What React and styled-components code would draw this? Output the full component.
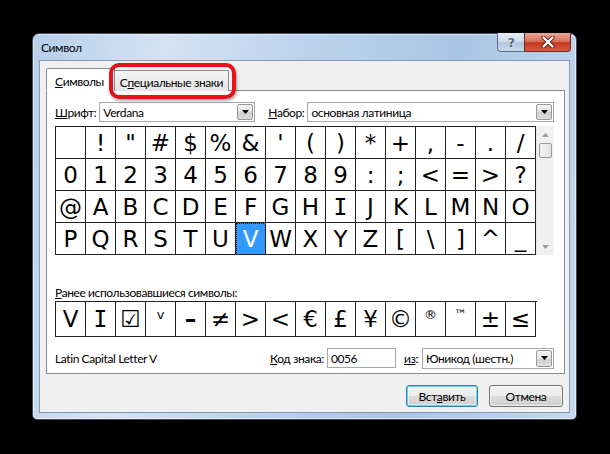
import React from 'react'
import styled, { createGlobalStyle } from 'styled-components'

const GlobalStyle = createGlobalStyle`
  html, body {
    margin: 0;
    padding: 0;
    background: #000;
  }
  body {
    font-family: 'Lato', 'Liberation Sans', sans-serif;
    font-size: 12px;
    letter-spacing: -0.4px;
    color: #000;
  }
`

const Screen = styled.div`
  width: 610px;
  height: 454px;
  padding: 33px 0 0 32px;
  box-sizing: border-box;
`

const Window = styled.div`
  width: 545px;
  height: 387px;
  box-sizing: border-box;
  border: 1px solid #3e4c5e;
  border-radius: 7px 7px 5px 5px;
  background: linear-gradient(100deg, #b6cfe9 0%, #d3e3f4 22%, #bcd3ec 45%, #aac5e4 70%, #c3d8ef 100%);
  box-shadow: inset 0 0 0 1px rgba(255, 255, 255, 0.55);
  display: flex;
  flex-direction: column;
`

const TitleBar = styled.div`
  height: 26px;
  display: flex;
  align-items: flex-start;
  padding-left: 8px;
`

const Title = styled.div`
  line-height: 27px;
  font-size: 12px;
`

const Caption = styled.div`
  margin-left: auto;
  margin-right: 5px;
  margin-top: -1px;
  display: flex;
`

const HelpButton = styled.div`
  width: 27px;
  height: 19px;
  box-sizing: border-box;
  border: 1px solid #5b7190;
  border-right: none;
  border-top: none;
  border-radius: 0 0 0 4px;
  background: linear-gradient(#e6eef7 0%, #cfdcea 45%, #b3c6dc 55%, #c9d9ea 100%);
  display: flex;
  align-items: center;
  justify-content: center;
  font-family: 'DejaVu Sans', sans-serif;
  font-weight: bold;
  font-size: 13px;
  color: #5a6b80;
  text-shadow: 0 0 2px #fff;
`

const CloseButton = styled.div`
  width: 47px;
  height: 19px;
  box-sizing: border-box;
  border: 1px solid #6e2a22;
  border-top: none;
  border-radius: 0 0 4px 0;
  background: linear-gradient(#e7a799 0%, #d9735f 45%, #c6371f 55%, #d65a43 100%);
  display: flex;
  align-items: center;
  justify-content: center;
`

const Client = styled.div`
  flex: 1;
  margin: 0 6px 7px 6px;
  background: #f0f0f0;
  border: 1px solid #8798b1;
  padding: 7px 4px 5px 6px;
  display: flex;
  flex-direction: column;
`

const TabStrip = styled.div`
  height: 23px;
  display: flex;
  align-items: flex-end;
  margin-bottom: -1px;
  position: relative;
  z-index: 1;
`

const Tab = styled.div`
  position: relative;
  box-sizing: border-box;
  height: ${p => (p.$active ? '23px' : '21px')};
  padding: ${p => (p.$active ? '3px 10px 0 8px' : '2px 5px 0 5px')};
  margin-right: ${p => (p.$active ? '-1px' : '0')};
  border: 1px solid #898c95;
  border-bottom: ${p => (p.$active ? '1px solid #fff' : 'none')};
  border-radius: 2px 2px 0 0;
  background: ${p => (p.$active ? '#fff' : 'linear-gradient(#f4f4f4, #e6e6e6)')};
  display: flex;
  align-items: center;
  white-space: nowrap;
`

const Highlight = styled.div`
  position: absolute;
  left: -6px;
  right: -8px;
  top: -8px;
  bottom: -8px;
  border: 4px solid #e3121b;
  border-radius: 10px;
  box-shadow: 1px 2px 3px rgba(0, 0, 0, 0.35);
  pointer-events: none;
`

const Accel = styled.span`
  text-decoration: underline;
`

const Panel = styled.div`
  background: #fff;
  border: 1px solid #898c95;
  padding: 11px 10px 4px 8px;
  display: flex;
  flex-direction: column;
`

const FieldRow = styled.div`
  display: flex;
  align-items: center;
  height: ${p => p.$h || 20}px;
  margin-top: ${p => p.$mt || 0}px;
`

const Label = styled.span`
  white-space: nowrap;
  margin: ${p => p.$m || '0'};
`

const Combo = styled.div`
  box-sizing: border-box;
  height: ${p => p.$h || 20}px;
  width: ${p => (p.$w ? `${p.$w}px` : 'auto')};
  flex: ${p => (p.$w ? 'none' : '1')};
  border: 1px solid #a5a7ad;
  background: #fff;
  display: flex;
  align-items: stretch;
`

const ComboValue = styled.div`
  flex: 1;
  padding-left: 3px;
  display: flex;
  align-items: center;
  white-space: nowrap;
  overflow: hidden;
`

const DropButton = styled.div`
  width: 16px;
  margin: 1px;
  box-sizing: border-box;
  border: 1px solid #9a9a9a;
  border-radius: 2px;
  background: linear-gradient(#f3f3f3 0%, #e3e3e3 50%, #cfcfcf 51%, #dcdcdc 100%);
  display: flex;
  align-items: center;
  justify-content: center;
`

const TextBox = styled.div`
  box-sizing: border-box;
  width: 69px;
  height: 20px;
  border: 1px solid #a5a7ad;
  padding-left: 3px;
  display: flex;
  align-items: center;
`

const GridArea = styled.div`
  display: flex;
  margin-top: 4px;
`

const CharGrid = styled.div`
  display: grid;
  grid-template-columns: repeat(16, 30px);
  border-top: 1px solid #222;
  border-left: 1px solid #222;
`

const Cell = styled.div`
  box-sizing: border-box;
  width: 30px;
  height: ${p => p.$h || 32}px;
  border-right: 1px solid #222;
  border-bottom: 1px solid #222;
  display: flex;
  align-items: ${p => (p.$small ? 'flex-start' : 'center')};
  justify-content: center;
  padding-top: ${p => (p.$small ? '5px' : '0')};
  font-family: ${p => (p.$mono ? "'DejaVu Sans Mono'" : "'DejaVu Sans'")}, sans-serif;
  font-size: ${p => (p.$small ? '13px' : '23px')};
  font-weight: ${p => (p.$bold ? 'bold' : 'normal')};
  letter-spacing: 0;
  color: ${p => (p.$selected ? '#fff' : '#000')};
  background: ${p => (p.$selected ? '#3399ff' : '#fff')};
  outline: ${p => (p.$selected ? '1px dotted #222' : 'none')};
  outline-offset: -1px;
`

const Scrollbar = styled.div`
  width: 17px;
  height: 129px;
  background: #f0f0f0;
  border-left: 1px solid #e6e6e6;
  display: flex;
  flex-direction: column;
  align-items: center;
`

const ScrollArrow = styled.div`
  height: 17px;
  width: 100%;
  display: flex;
  align-items: center;
  justify-content: center;
  margin-top: ${p => (p.$down ? 'auto' : '0')};
`

const Thumb = styled.div`
  width: 13px;
  height: 15px;
  box-sizing: border-box;
  border: 1px solid #9a9a9a;
  border-radius: 2px;
  background: linear-gradient(90deg, #f4f4f4, #e2e2e2);
`

const RecentLabel = styled.div`
  margin-top: 30px;
  height: 16px;
  line-height: 16px;
`

const RecentRow = styled.div`
  display: flex;
  width: 481px;
  border-top: 1px solid #222;
  border-left: 1px solid #222;
`

const NameText = styled.div`
  flex: 1;
  white-space: nowrap;
`

const ButtonRow = styled.div`
  display: flex;
  justify-content: flex-end;
  gap: 11px;
  margin-top: 11px;
  padding-right: 2px;
`

const Button = styled.div`
  box-sizing: border-box;
  width: ${p => p.$w}px;
  height: 22px;
  border: 1px solid ${p => (p.$default ? '#3c7fb1' : '#707070')};
  border-radius: 3px;
  background: linear-gradient(#f2f2f2 0%, #ebebeb 49%, #dddddd 50%, #cfcfcf 100%);
  box-shadow: ${p => (p.$default ? 'inset 0 0 0 1px #5fd3f7, inset 0 0 0 2px rgba(255,255,255,0.5)' : 'inset 0 0 0 1px rgba(255,255,255,0.7)')};
  display: flex;
  align-items: center;
  justify-content: center;
`

const ArrowDown = ({ color = '#000' }) => (
  <svg width="7" height="4" viewBox="0 0 7 4">
    <path d="M0 0 H7 L3.5 4 Z" fill={color} />
  </svg>
)

const ArrowUp = ({ color = '#000' }) => (
  <svg width="7" height="4" viewBox="0 0 7 4">
    <path d="M0 4 H7 L3.5 0 Z" fill={color} />
  </svg>
)

const CloseGlyph = () => (
  <svg width="14" height="12" viewBox="0 0 14 12">
    <path d="M2.5 1.5 L11.5 10.5 M11.5 1.5 L2.5 10.5" stroke="#6a1c14" strokeWidth="4.2" strokeLinecap="round" />
    <path d="M2.5 1.5 L11.5 10.5 M11.5 1.5 L2.5 10.5" stroke="#fff" strokeWidth="2.4" strokeLinecap="round" />
  </svg>
)

const chars = Array.from({ length: 64 }, (_, i) => String.fromCharCode(0x20 + i))
const selectedChar = 'V'

const recent = [
  { c: 'V' }, { c: 'I', mono: true }, { c: '☑', bold: true }, { c: 'v', small: true }, { c: '–', bold: true }, { c: '≠' },
  { c: '>' }, { c: '<' }, { c: '€' }, { c: '£' }, { c: '¥' }, { c: '©' },
  { c: '®', small: true }, { c: '™', small: true }, { c: '±' }, { c: '≤' },
]

export default function App() {
  return (
    <>
      <GlobalStyle />
      <Screen>
        <Window>
          <TitleBar>
            <Title>Символ</Title>
            <Caption>
              <HelpButton>?</HelpButton>
              <CloseButton><CloseGlyph /></CloseButton>
            </Caption>
          </TitleBar>
          <Client>
            <TabStrip>
              <Tab $active><Accel>С</Accel>имволы</Tab>
              <Tab>
                С<Accel>п</Accel>ециальные знаки
                <Highlight />
              </Tab>
            </TabStrip>
            <Panel>
              <FieldRow>
                <Label $m="0 3px 0 0"><Accel>Ш</Accel>рифт:</Label>
                <Combo $w={156}>
                  <ComboValue>Verdana</ComboValue>
                  <DropButton><ArrowDown /></DropButton>
                </Combo>
                <Label $m="0 3px 0 13px"><Accel>Н</Accel>абор:</Label>
                <Combo>
                  <ComboValue>основная латиница</ComboValue>
                  <DropButton><ArrowDown /></DropButton>
                </Combo>
              </FieldRow>
              <GridArea>
                <CharGrid>
                  {chars.map(c => (
                    <Cell key={c} $selected={c === selectedChar} $mono={c === 'I'}>{c}</Cell>
                  ))}
                </CharGrid>
                <Scrollbar>
                  <ScrollArrow><ArrowUp color="#9a9a9a" /></ScrollArrow>
                  <Thumb />
                  <ScrollArrow $down><ArrowDown color="#9a9a9a" /></ScrollArrow>
                </Scrollbar>
              </GridArea>
              <RecentLabel><Accel>Р</Accel>анее использовавшиеся символы:</RecentLabel>
              <RecentRow>
                {recent.map((r, i) => (
                  <Cell key={i} $h={35} $small={r.small} $mono={r.mono} $bold={r.bold}>{r.c}</Cell>
                ))}
              </RecentRow>
              <FieldRow $h={22} $mt={10}>
                <NameText>Latin Capital Letter V</NameText>
                <Label $m="0 3px 0 0"><Accel>К</Accel>од знака:</Label>
                <TextBox>0056</TextBox>
                <Label $m="0 4px 0 8px"><Accel>из</Accel>:</Label>
                <Combo $w={132} $h={21}>
                  <ComboValue>Юникод (шестн.)</ComboValue>
                  <DropButton><ArrowDown /></DropButton>
                </Combo>
              </FieldRow>
            </Panel>
            <ButtonRow>
              <Button $w={72} $default>Вст<Accel>а</Accel>вить</Button>
              <Button $w={74}>Отмена</Button>
            </ButtonRow>
          </Client>
        </Window>
      </Screen>
    </>
  )
}
